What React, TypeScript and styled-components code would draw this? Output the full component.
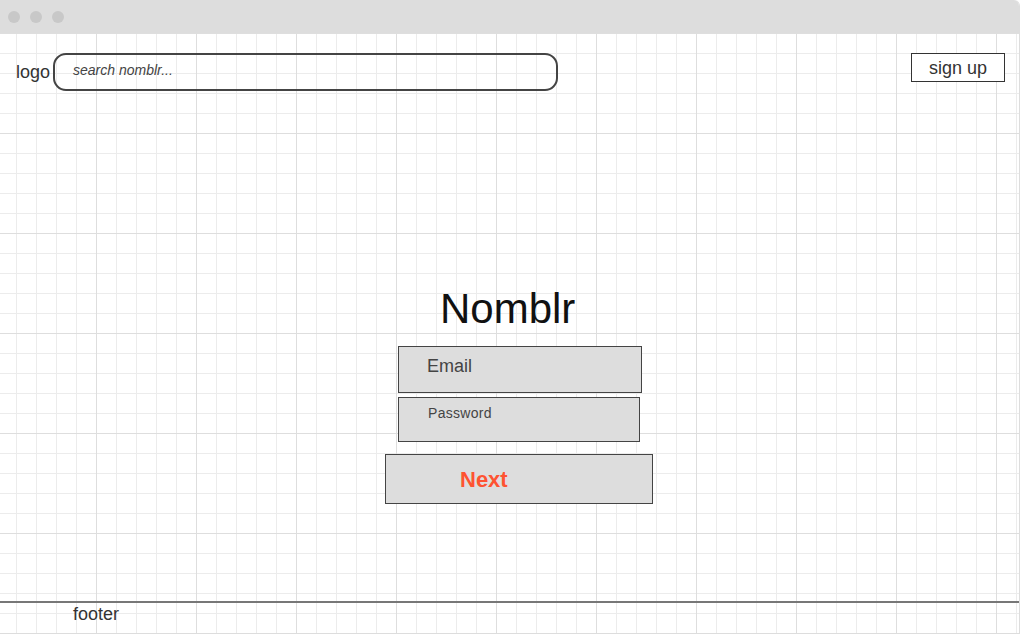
import React from "react";
import styled, { createGlobalStyle } from "styled-components";

const GlobalStyle = createGlobalStyle`
  html, body {
    margin: 0;
    padding: 0;
    background: #ffffff;
  }
  body {
    font-family: "Liberation Sans", Arial, sans-serif;
    color: #333;
  }
  * { box-sizing: border-box; }
`;

const Window = styled.div`
  width: 1020px;
  height: 634px;
  display: flex;
  flex-direction: column;
  border-right: 1px solid #dddddd;
  border-bottom: 1px solid #dddddd;
  border-top-right-radius: 6px;
  overflow: hidden;
  background: #ffffff;
`;

const TitleBar = styled.div`
  height: 33px;
  flex: 0 0 33px;
  background: #dddddd;
  display: flex;
  align-items: center;
  gap: 10px;
  padding-left: 8px;
`;

const Dot = styled.span`
  width: 12px;
  height: 12px;
  border-radius: 50%;
  background: #c8c8c8;
`;

const Canvas = styled.div`
  flex: 1;
  display: flex;
  flex-direction: column;
  background-color: #ffffff;
  background-image:
    linear-gradient(to right, #dedede 1px, transparent 1px),
    linear-gradient(to bottom, #dedede 1px, transparent 1px),
    linear-gradient(to right, #ececec 1px, transparent 1px),
    linear-gradient(to bottom, #ececec 1px, transparent 1px);
  background-size: 100px 100px, 100px 100px, 20px 20px, 20px 20px;
  background-position: 96px 0, 0 0, 16px 0, 0 0;
`;

const Header = styled.header`
  display: flex;
  align-items: flex-start;
  padding: 20px 14px 0 16px;
  height: 58px;
`;

const Logo = styled.div`
  font-size: 18px;
  line-height: 21px;
  color: #333;
  height: 38px;
  display: flex;
  align-items: center;
  margin-right: 3px;
  padding-top: 1px;
`;

const Search = styled.div`
  width: 505px;
  height: 38px;
  border: 2px solid #444;
  border-radius: 13px;
  padding: 7px 0 0 18px;
  font-size: 14px;
  line-height: 16px;
  font-style: italic;
  color: #444;
`;

const Spacer = styled.div`
  flex: 1;
`;

const SignUp = styled.div`
  width: 94px;
  height: 29px;
  border: 1px solid #333;
  display: flex;
  align-items: center;
  justify-content: center;
  font-size: 18px;
  line-height: 21px;
  color: #333;
  padding-top: 1px;
  background: #ffffff;
`;

const Main = styled.main`
  flex: 1;
  display: flex;
  flex-direction: column;
  align-items: center;
  padding-top: 194px;
`;

const Form = styled.div`
  width: 268px;
  margin-left: 19px;
  display: flex;
  flex-direction: column;
  align-items: flex-start;
`;

const Title = styled.h1`
  margin: 0 0 13px 55px;
  font-size: 42px;
  line-height: 48px;
  font-weight: 400;
  color: #111;
`;

const Field = styled.div<{ $w: number; $h: number; $size: number; $pt: number; $ls: number; $mt?: number }>`
  width: ${(p) => p.$w}px;
  height: ${(p) => p.$h}px;
  margin: ${(p) => p.$mt ?? 0}px 0 0 13px;
  background: #dddddd;
  border: 1px solid #444;
  padding: ${(p) => p.$pt}px 0 0 ${(p) => (p.$size > 15 ? 28 : 29)}px;
  font-size: ${(p) => p.$size}px;
  line-height: ${(p) => Math.round(p.$size * 1.16)}px;
  letter-spacing: ${(p) => p.$ls}px;
  color: #444;
`;

const NextButton = styled.div`
  width: 268px;
  height: 50px;
  margin-top: 12px;
  background: #dddddd;
  border: 1px solid #444;
  display: flex;
  align-items: center;
  padding: 1px 0 0 74px;
  font-size: 22px;
  font-weight: 700;
  color: #fe5331;
`;

const Footer = styled.footer`
  height: 32px;
  border-top: 2px solid #777;
  padding: 1px 0 0 73px;
  font-size: 18px;
  line-height: 21px;
  color: #333;
`;

export default function App() {
  return (
    <>
      <GlobalStyle />
      <Window>
        <TitleBar>
          <Dot />
          <Dot />
          <Dot />
        </TitleBar>
        <Canvas>
          <Header>
            <Logo>logo</Logo>
            <Search>search nomblr...</Search>
            <Spacer />
            <SignUp>sign up</SignUp>
          </Header>
          <Main>
            <Form>
              <Title>Nomblr</Title>
              <Field $w={244} $h={47} $size={18} $pt={9} $ls={0}>Email</Field>
              <Field $w={242} $h={45} $size={14} $pt={7} $ls={0.3} $mt={4}>Password</Field>
              <NextButton>Next</NextButton>
            </Form>
          </Main>
          <Footer>footer</Footer>
        </Canvas>
      </Window>
    </>
  );
}
